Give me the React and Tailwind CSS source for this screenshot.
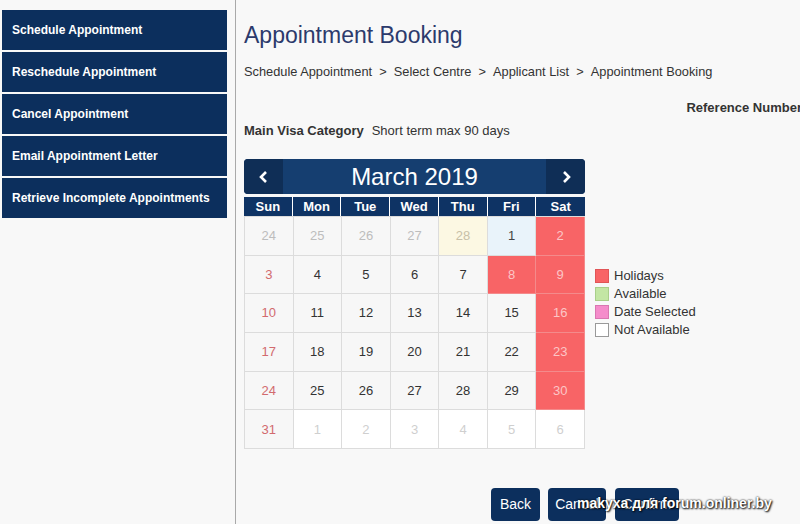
import React from "react";

const menu = [
  "Schedule Appointment",
  "Reschedule Appointment",
  "Cancel Appointment",
  "Email Appointment Letter",
  "Retrieve Incomplete Appointments",
];

const days = ["Sun", "Mon", "Tue", "Wed", "Thu", "Fri", "Sat"];

// kind: o = other month, n = normal, s = sunday, h = holiday, t = today(28), f = first
const weeks = [
  [["24", "o"], ["25", "o"], ["26", "o"], ["27", "o"], ["28", "t"], ["1", "f"], ["2", "h"]],
  [["3", "s"], ["4", "n"], ["5", "n"], ["6", "n"], ["7", "n"], ["8", "h"], ["9", "h"]],
  [["10", "s"], ["11", "n"], ["12", "n"], ["13", "n"], ["14", "n"], ["15", "n"], ["16", "h"]],
  [["17", "s"], ["18", "n"], ["19", "n"], ["20", "n"], ["21", "n"], ["22", "n"], ["23", "h"]],
  [["24", "s"], ["25", "n"], ["26", "n"], ["27", "n"], ["28", "n"], ["29", "n"], ["30", "h"]],
  [["31", "s"], ["1", "w"], ["2", "w"], ["3", "w"], ["4", "w"], ["5", "w"], ["6", "w"]],
];

const cellClass = {
  o: "bg-[#f7f7f7] text-[#bdbdbd]",
  n: "bg-[#f7f7f7] text-[#333]",
  s: "bg-[#f7f7f7] text-[#d26a6e]",
  h: "bg-[#f86466] text-[#fcc6c6] border-[#f48a8b]",
  t: "bg-[#fcf8e3] text-[#c8c0a8]",
  f: "bg-[#e9f3fa] text-[#444]",
  w: "bg-white text-[#cfcfcf]",
};

const legend = [
  ["Holidays", "bg-[#f86466] border-[#e15557]"],
  ["Available", "bg-[#c3e6a4] border-[#a9cf8a]"],
  ["Date Selected", "bg-[#f58ccb] border-[#d977b2]"],
  ["Not Available", "bg-white border-[#999]"],
];

export default function App() {
  return (
    <div
      className="w-[800px] h-[524px] overflow-hidden bg-[#f8f8f8] flex"
      style={{ fontFamily: '"Liberation Sans", Arial, sans-serif' }}
    >
      {/* Sidebar */}
      <div className="w-[235px] shrink-0 pl-[2px] pr-[8px] pt-[10px] flex flex-col gap-[2px]">
        {menu.map((m) => (
          <div
            key={m}
            className="h-[40px] bg-[#0c2f5d] text-white font-bold text-[12px] flex items-center pl-[10px]"
          >
            {m}
          </div>
        ))}
      </div>

      {/* Main */}
      <div className="flex-1 border-l border-[#a9a9a9] pl-[8px] relative">
        <h1 className="text-[23px] text-[#2c3a6c] mt-[21px] leading-[28px]">Appointment Booking</h1>
        <div className="text-[12.8px] text-[#333] mt-[15px] leading-[16px] whitespace-nowrap">
          Schedule Appointment&nbsp; &gt; &nbsp;Select Centre&nbsp; &gt; &nbsp;Applicant List&nbsp; &gt; &nbsp;Appointment Booking
        </div>
        <div className="text-[13px] text-[#333] font-bold mt-[20px] leading-[16px] text-right whitespace-nowrap mr-[-2px]">
          Reference Number
        </div>
        <div className="text-[13px] text-[#333] mt-[7px] leading-[16px]">
          <span className="font-bold">Main Visa Category</span>
          <span className="ml-[8px]">Short term max 90 days</span>
        </div>

        <div className="flex mt-[20px]">
          {/* Calendar */}
          <div className="w-[341px]">
            <div className="h-[35px] bg-[#153e70] rounded-[4px] flex items-stretch overflow-hidden">
              <div className="w-[39px] bg-[#0f2e56] flex items-center justify-center">
                <svg width="12" height="14" viewBox="0 0 12 14">
                  <path d="M8 2 L3 7 L8 12" stroke="white" strokeWidth="2.6" fill="none" />
                </svg>
              </div>
              <div className="flex-1 flex items-center justify-center text-white text-[24px]">March 2019</div>
              <div className="w-[39px] bg-[#0f2e56] flex items-center justify-center">
                <svg width="12" height="14" viewBox="0 0 12 14">
                  <path d="M4 2 L9 7 L4 12" stroke="white" strokeWidth="2.6" fill="none" />
                </svg>
              </div>
            </div>
            <div className="grid grid-cols-7 mt-[3px] bg-[#0e3364]">
              {days.map((d, i) => (
                <div
                  key={d}
                  className={
                    "h-[19px] text-white font-bold text-[13px] flex items-center justify-center " +
                    (i < 6 ? "border-r border-white" : "")
                  }
                >
                  {d}
                </div>
              ))}
            </div>
            <div className="grid grid-cols-7 border-l border-t border-[#dcdcdc]">
              {weeks.flat().map(([n, k], i) => (
                <div
                  key={i}
                  className={
                    "h-[38.7px] flex items-center justify-center text-[13px] border-r border-b border-[#dcdcdc] " +
                    cellClass[k]
                  }
                >
                  {n}
                </div>
              ))}
            </div>
          </div>

          {/* Legend */}
          <div className="ml-[10px] mt-[110px] flex flex-col gap-[4px]">
            {legend.map(([t, c]) => (
              <div key={t} className="flex items-center gap-[5px] h-[14px]">
                <span className={"w-[14px] h-[14px] border " + c} />
                <span className="text-[13px] text-[#333] leading-[14px]">{t}</span>
              </div>
            ))}
          </div>
        </div>

        {/* Buttons */}
        <div className="flex ml-[247px] mt-[39px]">
          <button className="h-[33px] w-[49px] rounded-[4px] bg-[#0c2f5d] text-white text-[14px]">Back</button>
          <button className="h-[33px] w-[58px] ml-[8px] rounded-[4px] bg-[#0c2f5d] text-white text-[14px]">Cancel</button>
          <button className="h-[33px] w-[64px] ml-[9px] rounded-[4px] bg-[#0c2f5d] text-white text-[14px]">Confirm</button>
        </div>
        <div
          className="absolute left-[341px] top-[493px] text-white font-bold text-[14px] whitespace-nowrap"
          style={{ textShadow: "0 0 2px #000, 1px 1px 2px #000" }}
        >
          makyxa для forum.onliner.by
        </div>
      </div>
    </div>
  );
}
